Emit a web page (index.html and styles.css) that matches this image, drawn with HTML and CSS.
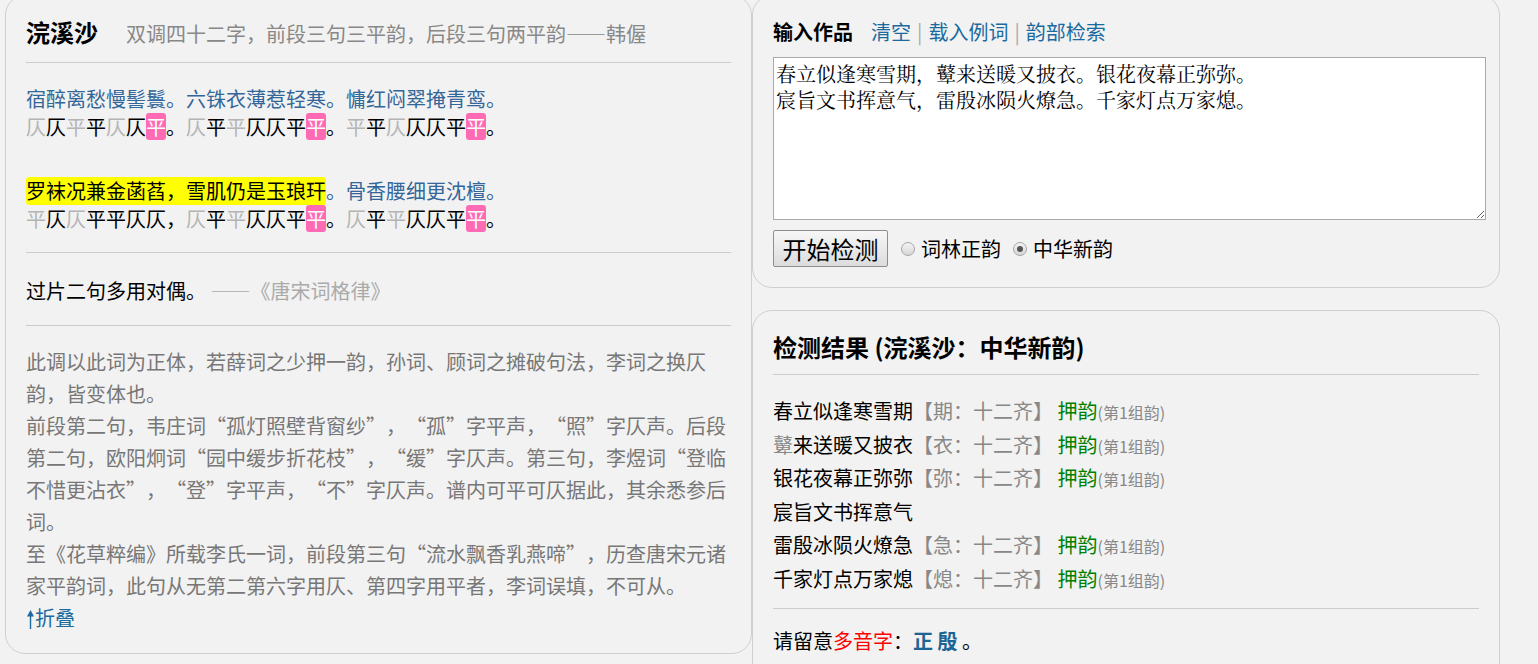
FILE: index.html
```html
<!DOCTYPE html>
<html lang="zh-CN">
<head>
<meta charset="utf-8">
<title>浣溪沙</title>
<link rel="stylesheet" href="styles.css">
</head>
<body>
<div class="page">
  <div class="panel left-panel">
    <div class="title-row"><span class="title">浣溪沙</span><span class="subtitle">双调四十二字，前段三句三平韵，后段三句两平韵——韩偓</span></div>
    <div class="verse">
      <div class="stanza">
        <div class="vline vtext">宿醉离愁慢髻鬟。六铢衣薄惹轻寒。慵红闷翠掩青鸾。</div>
        <div class="vline tones"><span class="o">仄</span><span class="f">仄</span><span class="o">平</span><span class="f">平</span><span class="o">仄</span><span class="f">仄</span><span class="r">平</span>。<span class="o">仄</span><span class="f">平</span><span class="o">平</span><span class="f">仄</span><span class="f">仄</span><span class="f">平</span><span class="r">平</span>。<span class="o">平</span><span class="f">平</span><span class="o">仄</span><span class="f">仄</span><span class="f">仄</span><span class="f">平</span><span class="r">平</span>。</div>
      </div>
      <div class="stanza stanza-next">
        <div class="vline vtext"><span class="hl">罗袜况兼金菡萏，雪肌仍是玉琅玕</span>。骨香腰细更沈檀。</div>
        <div class="vline tones"><span class="o">平</span><span class="f">仄</span><span class="o">仄</span><span class="f">平</span><span class="f">平</span><span class="f">仄</span><span class="f">仄</span>，<span class="o">仄</span><span class="f">平</span><span class="o">平</span><span class="f">仄</span><span class="f">仄</span><span class="f">平</span><span class="r">平</span>。<span class="o">仄</span><span class="f">平</span><span class="o">平</span><span class="f">仄</span><span class="f">仄</span><span class="f">平</span><span class="r">平</span>。</div>
      </div>
    </div>
    <div class="note">过片二句多用对偶。 <span class="src">——《唐宋词格律》</span></div>
    <div class="desc">
      <p>此调以此词为正体，若薛词之少押一韵，孙词、顾词之摊破句法，李词之换仄韵，皆变体也。</p>
      <p>前段第二句，韦庄词<span class="ql">“</span>孤灯照壁背窗纱<span class="qr">”</span>，<span class="ql">“</span>孤<span class="qr">”</span>字平声，<span class="ql">“</span>照<span class="qr">”</span>字仄声。后段第二句，欧阳炯词<span class="ql">“</span>园中缓步折花枝<span class="qr">”</span>，<span class="ql">“</span>缓<span class="qr">”</span>字仄声。第三句，李煜词<span class="ql">“</span>登临不惜更沾衣<span class="qr">”</span>，<span class="ql">“</span>登<span class="qr">”</span>字平声，<span class="ql">“</span>不<span class="qr">”</span>字仄声。谱内可平可仄据此，其余悉参后词。</p>
      <p>至《花草粹编》所载李氏一词，前段第三句<span class="ql">“</span>流水飘香乳燕啼<span class="qr">”</span>，历查唐宋元诸家平韵词，此句从无第二第六字用仄、第四字用平者，李词误填，不可从。</p>
      <a class="link fold"><svg class="arrow" width="9" height="20" viewBox="0 0 9 20"><path d="M4.5 1 L1 7.5 H3.8 V20 H5.2 V7.5 H8 Z" fill="currentColor"/></svg>折叠</a>
    </div>
  </div>
  <div class="right-col">
    <div class="panel input-panel">
      <div class="input-head"><span class="head-title">输入作品</span><a class="link">清空</a><span class="sep">|</span><a class="link">载入例词</a><span class="sep">|</span><a class="link">韵部检索</a></div>
      <textarea class="poem-input">春立似逢寒雪期，鼙来送暖又披衣。银花夜幕正弥弥。
宸旨文书挥意气，雷殷冰陨火燎急。千家灯点万家熄。</textarea>
      <div class="controls">
        <button class="start-btn">开始检测</button>
        <label class="radio-label"><input type="radio" name="yun" class="radio">词林正韵</label>
        <label class="radio-label"><input type="radio" name="yun" class="radio" checked>中华新韵</label>
      </div>
    </div>
    <div class="panel result-panel">
      <div class="result-title">检测结果 (浣溪沙：中华新韵)</div>
      <div class="results">
        <div class="rline">春立似逢寒雪期<span class="rb">【期：十二齐】</span> <span class="ok">押韵</span><span class="grp">(第1组韵)</span></div>
        <div class="rline"><span class="rb">鼙</span>来送暖又披衣<span class="rb">【衣：十二齐】</span> <span class="ok">押韵</span><span class="grp">(第1组韵)</span></div>
        <div class="rline">银花夜幕正弥弥<span class="rb">【弥：十二齐】</span> <span class="ok">押韵</span><span class="grp">(第1组韵)</span></div>
        <div class="rline">宸旨文书挥意气</div>
        <div class="rline">雷殷冰陨火燎急<span class="rb">【急：十二齐】</span> <span class="ok">押韵</span><span class="grp">(第1组韵)</span></div>
        <div class="rline">千家灯点万家熄<span class="rb">【熄：十二齐】</span> <span class="ok">押韵</span><span class="grp">(第1组韵)</span></div>
      </div>
      <div class="footer-note">请留意<span class="red">多音字</span>：<b class="poly">正</b> <b class="poly">殷</b> 。</div>
    </div>
  </div>
</div>
</body>
</html>
```
FILE: styles.css
```css
html, body {
  margin: 0;
  padding: 0;
  background: #f2f2f2;
}
body {
  font-family: "Noto Sans CJK SC", "Noto Sans", sans-serif;
  font-size: 20px;
  color: #000;
  overflow: hidden;
}
.page {
  display: flex;
  align-items: flex-start;
  margin-top: -5px;
  padding-left: 5px;
}
.panel {
  box-sizing: border-box;
  border: 1px solid #cfcfcf;
  border-radius: 20px;
  background: #f2f2f2;
}
.left-panel {
  width: 747px;
  padding: 18px 20px 19px;
}
.title-row {
  line-height: 36px;
  padding-bottom: 10px;
  border-bottom: 1px solid #cccccc;
  white-space: nowrap;
}
.title {
  font-size: 24px;
  font-weight: bold;
  margin-right: 28px;
}
.subtitle {
  font-size: 20px;
  color: #888888;
}
.verse {
  padding: 22px 0 19px;
  border-bottom: 1px solid #cccccc;
}
.stanza-next {
  margin-top: 36px;
}
.vline {
  line-height: 28px;
  height: 28px;
  white-space: nowrap;
}
.vtext {
  color: #336699;
}
.hl {
  display: inline-block;
  background: #ffff00;
  color: #000;
  border-radius: 3px;
  line-height: 28px;
  height: 28px;
  vertical-align: top;
}
.tones {
  color: #000;
}
.tones .o {
  color: #b4b4b4;
}
.tones .f {
  color: #000;
}
.tones .r {
  display: inline-block;
  width: 20px;
  height: 27px;
  line-height: 27px;
  background: #ff6ab4;
  color: #fff;
  border-radius: 3px;
  text-align: center;
  vertical-align: top;
}
.note {
  line-height: 32px;
  padding: 22px 0 18px;
  border-bottom: 1px solid #cccccc;
}
.note .src {
  color: #aaaaaa;
}
.desc {
  padding-top: 20px;
  color: #777777;
  line-height: 32px;
}
.desc p {
  margin: 0;
}
.ql, .qr {
  display: inline-block;
  width: 20px;
}
.ql {
  text-align: right;
}
.qr {
  text-align: left;
}
.link {
  color: #1a6aa0;
  text-decoration: none;
  cursor: pointer;
}
.fold {
  display: block;
}
.arrow {
  vertical-align: -3px;
}
.right-col {
  width: 748px;
  display: flex;
  flex-direction: column;
}
.input-panel {
  padding: 18px 20px 20px;
}
.input-head {
  line-height: 36px;
  margin-bottom: 7px;
  white-space: nowrap;
}
.head-title {
  font-weight: bold;
  margin-right: 18px;
}
.sep {
  color: #aaaaaa;
  margin: 0 6px;
}
.poem-input {
  display: block;
  box-sizing: border-box;
  width: 713px;
  height: 163px;
  margin: 0;
  padding: 3px 2px;
  border: 1px solid #a9a9a9;
  background: #fff;
  font-family: "Noto Serif CJK SC", "Liberation Serif", "Noto Sans CJK SC", serif;
  font-size: 20px;
  line-height: 26px;
  color: #000;
}
.controls {
  display: flex;
  align-items: center;
  margin-top: 10px;
  height: 37px;
}
.start-btn {
  box-sizing: border-box;
  height: 37px;
  width: 115px;
  padding: 0;
  font-family: "Noto Sans CJK SC", sans-serif;
  font-size: 24px;
  color: #000;
  border: 1px solid #8e8e8e;
  border-radius: 2px;
  background: linear-gradient(#f7f7f7, #dcdcdc);
  margin-right: 13px;
}
.radio-label {
  display: flex;
  align-items: center;
  margin-right: 12px;
}
.radio {
  -webkit-appearance: none;
  appearance: none;
  box-sizing: border-box;
  width: 14px;
  height: 14px;
  margin: 0 6px 0 0;
  border: 1px solid #a6a6a6;
  border-radius: 50%;
  background: linear-gradient(#f4f4f4, #d6d6d6);
  position: relative;
}
.radio:checked::after {
  content: "";
  position: absolute;
  left: 3px;
  top: 3px;
  width: 6px;
  height: 6px;
  border-radius: 50%;
  background: #555;
}
.result-panel {
  margin-top: 22px;
  padding: 18px 20px 20px;
  height: 400px;
}
.result-title {
  font-size: 24px;
  font-weight: bold;
  line-height: 36px;
  padding-bottom: 9px;
  border-bottom: 1px solid #cccccc;
}
.results {
  padding: 19px 0 12px;
  border-bottom: 1px solid #cccccc;
}
.rline {
  line-height: 33.6px;
  height: 33.6px;
  white-space: nowrap;
}
.rb {
  color: #888888;
}
.ok {
  color: #008000;
}
.grp {
  color: #888888;
  font-size: 16px;
}
.footer-note {
  padding-top: 15px;
  line-height: 34px;
}
.red {
  color: #ff0000;
}
.poly {
  color: #1a6496;
  font-weight: bold;
}
```
